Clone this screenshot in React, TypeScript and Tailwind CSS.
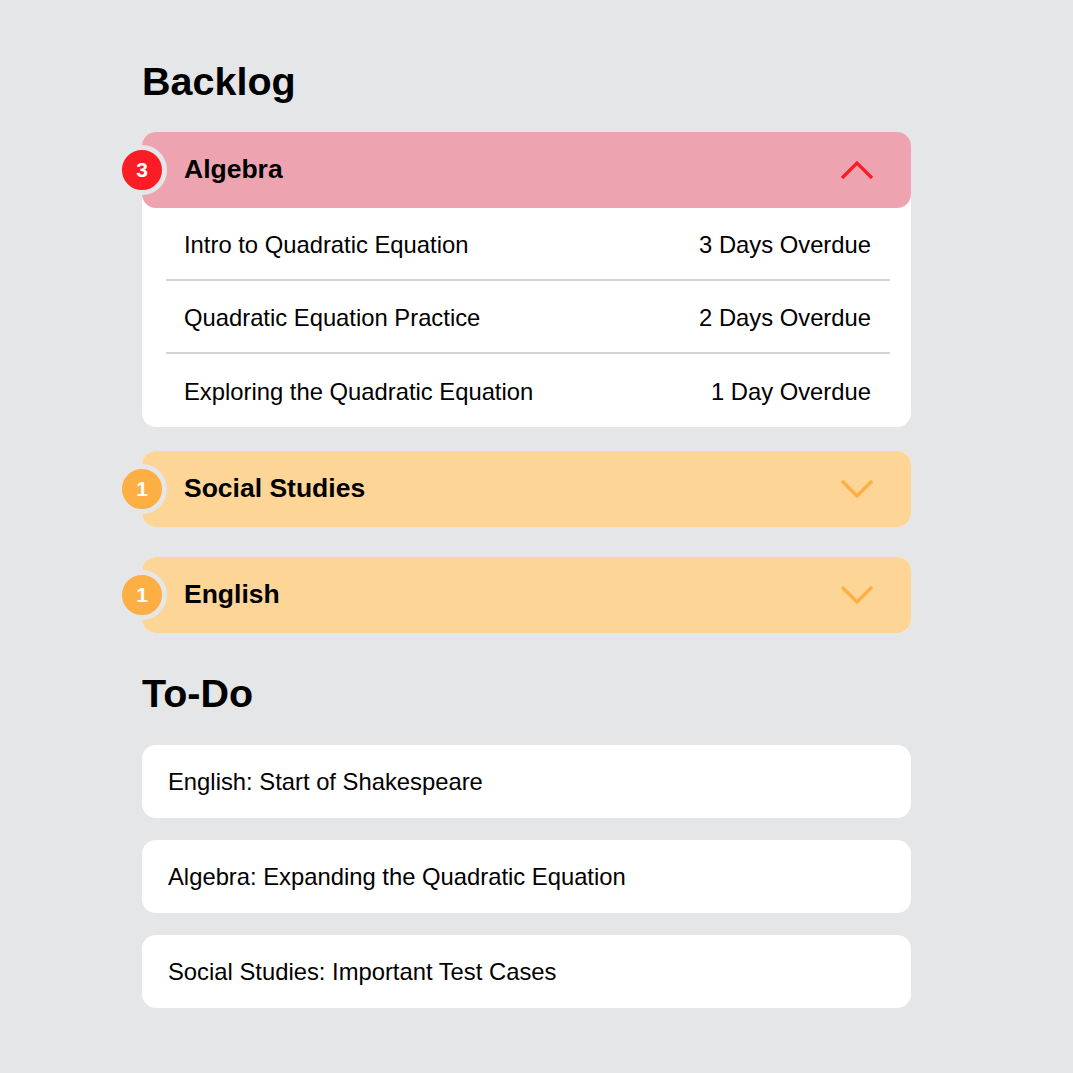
import { useState } from "react";

type Tone = "red" | "orange";

interface Subject {
  name: string;
  count: number;
  tone: Tone;
  items: { title: string; due: string }[];
}

const SUBJECTS: Subject[] = [
  {
    name: "Algebra",
    count: 3,
    tone: "red",
    items: [
      { title: "Intro to Quadratic Equation", due: "3 Days Overdue" },
      { title: "Quadratic Equation Practice", due: "2 Days Overdue" },
      { title: "Exploring the Quadratic Equation", due: "1 Day Overdue" },
    ],
  },
  { name: "Social Studies", count: 1, tone: "orange", items: [] },
  { name: "English", count: 1, tone: "orange", items: [] },
];

const TODOS = [
  "English: Start of Shakespeare",
  "Algebra: Expanding the Quadratic Equation",
  "Social Studies: Important Test Cases",
];

const TONES = {
  red: { header: "bg-[#eea4b0]", badge: "bg-[#fc1c25]", stroke: "#fc1c25" },
  orange: { header: "bg-[#fdd597]", badge: "bg-[#fdaf43]", stroke: "#fdaf43" },
};

function Chevron({ up, color }: { up: boolean; color: string }) {
  return (
    <svg width="34" height="22" viewBox="0 0 34 22" fill="none">
      <path
        d={up ? "M2 19 L17 4 L32 19" : "M2 3 L17 18 L32 3"}
        stroke={color}
        strokeWidth="3.2"
      />
    </svg>
  );
}

function SubjectCard({ subject, open, onToggle }: { subject: Subject; open: boolean; onToggle: () => void }) {
  const tone = TONES[subject.tone];
  return (
    <div className="bg-white rounded-[14px]">
      <button
        onClick={onToggle}
        className={`relative w-full h-[76px] flex items-center justify-between pl-[42px] pr-[37px] rounded-[14px] ${tone.header}`}
      >
        <span
          className={`absolute left-[-25px] top-1/2 -translate-y-1/2 w-[50px] h-[50px] rounded-full border-[5px] border-[#e5e6e8] flex items-center justify-center text-white text-[21px] font-bold ${tone.badge}`}
        >
          {subject.count}
        </span>
        <span className="text-[26.5px] font-bold text-black">{subject.name}</span>
        <Chevron up={open} color={tone.stroke} />
      </button>
      {open && subject.items.length > 0 && (
        <div className="pl-[24px] pr-[21px]">
          {subject.items.map((item, i) => (
            <div
              key={item.title}
              className={`h-[73px] flex items-center justify-between pt-[3px] pl-[18px] pr-[19px] text-[23.8px] text-black ${
                i < subject.items.length - 1 ? "border-b-2 border-[#d3d3d3]" : ""
              }`}
            >
              <span>{item.title}</span>
              <span>{item.due}</span>
            </div>
          ))}
        </div>
      )}
    </div>
  );
}

export default function App() {
  const [open, setOpen] = useState<string | null>("Algebra");

  return (
    <div className="min-h-[1073px] bg-[#e5e6e8] font-['Liberation_Sans',Arial,sans-serif]">
      <div className="w-[769px] ml-[142px] pt-[58px] pb-[64px]">
        <h1 className="text-[39.5px] font-bold leading-[46px] text-black">Backlog</h1>

        <div className="mt-[28px] flex flex-col">
          {SUBJECTS.map((s, i) => (
            <div key={s.name} className={i === 1 ? "mt-[24px]" : i === 2 ? "mt-[30px]" : ""}>
              <SubjectCard
                subject={s}
                open={open === s.name}
                onToggle={() => setOpen(open === s.name ? null : s.name)}
              />
            </div>
          ))}
        </div>

        <h2 className="mt-[37px] text-[39.5px] font-bold leading-[46px] text-black">To-Do</h2>

        <div className="mt-[29px] flex flex-col gap-[22px]">
          {TODOS.map((t) => (
            <div key={t} className="h-[73px] bg-white rounded-[14px] flex items-center px-[26px] text-[23.8px] text-black">
              {t}
            </div>
          ))}
        </div>
      </div>
    </div>
  );
}
